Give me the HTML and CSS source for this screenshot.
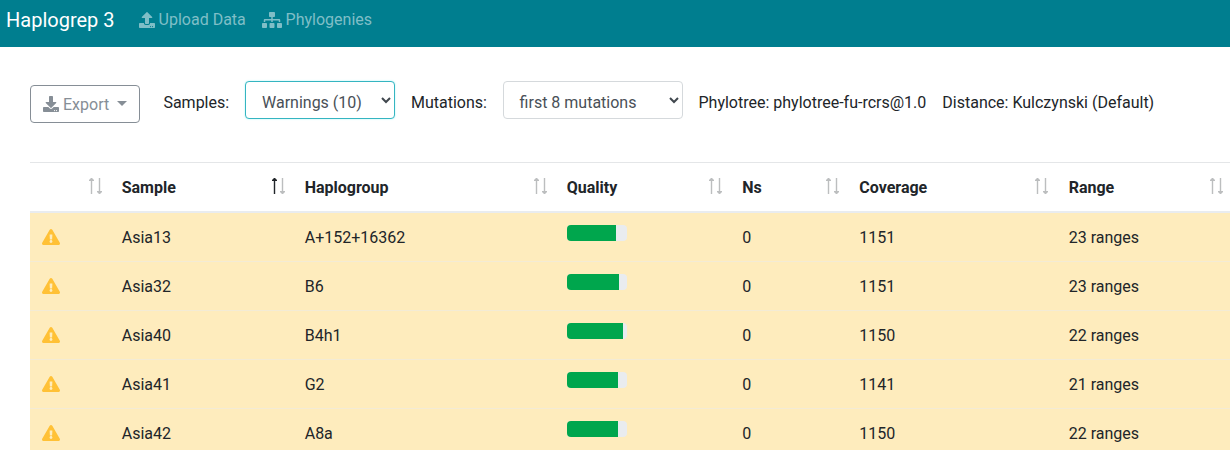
FILE: index.html
```html
<!DOCTYPE html>
<html lang="en">
<head>
<meta charset="utf-8">
<title>Haplogrep 3</title>
<link rel="stylesheet" href="styles.css">
</head>
<body>
<svg class="defs" aria-hidden="true">
  <symbol id="warn" viewBox="0 0 576 512"><path d="M569.517 440.013C587.975 472.007 564.806 512 527.94 512H48.054c-36.937 0-59.999-40.055-41.577-71.987L246.423 23.985c18.467-32.009 64.72-31.951 83.154 0l239.94 416.028zM288 354c-25.405 0-46 20.595-46 46s20.595 46 46 46 46-20.595 46-46-20.595-46-46-46zm-43.673-165.346l7.418 136c.347 6.364 5.609 11.346 11.982 11.346h48.546c6.373 0 11.635-4.982 11.982-11.346l7.418-136c.375-6.874-5.098-12.654-11.982-12.654h-63.383c-6.884 0-12.356 5.78-11.981 12.654z"/></symbol>
  <symbol id="up" viewBox="0 0 5 16"><path d="M1.800 2h1.400v14H1.800zM2 0h1L5 2v1H0V2z"/></symbol>
  <symbol id="down" viewBox="0 0 5 16"><path d="M1.800 0h1.400v14H1.800zM0 13h5v1L3 16H2L0 14z"/></symbol>
</svg>
<nav class="navbar">
  <a class="brand">Haplogrep 3</a>
  <a class="nav-link upload"><svg class="icon" viewBox="0 0 512 512"><path d="M296 384h-80c-13.300 0-24-10.700-24-24V192h-87.700c-17.800 0-26.700-21.500-14.100-34.100L242.300 5.700c7.500-7.500 19.800-7.500 27.300 0l152.200 152.200c12.600 12.600 3.700 34.100-14.100 34.100H320v168c0 13.300-10.700 24-24 24zm216-8v112c0 13.300-10.700 24-24 24H24c-13.300 0-24-10.700-24-24V376c0-13.300 10.700-24 24-24h136v8c0 30.900 25.100 56 56 56h80c30.900 0 56-25.100 56-56v-8h136c13.300 0 24 10.700 24 24zm-124 88c0-11-9-20-20-20s-20 9-20 20 9 20 20 20 20-9 20-20zm64 0c0-11-9-20-20-20s-20 9-20 20 9 20 20 20 20-9 20-20z"/></svg><span>Upload Data</span></a>
  <a class="nav-link"><svg class="icon icon-wide" viewBox="0 0 640 512"><path d="M128 352H32c-17.670 0-32 14.330-32 32v96c0 17.670 14.330 32 32 32h96c17.670 0 32-14.330 32-32v-96c0-17.670-14.330-32-32-32zm-24-80h192v48h48v-48h192v48h48v-57.590c0-21.170-17.230-38.410-38.410-38.410H344v-64h40c17.670 0 32-14.330 32-32V32c0-17.670-14.330-32-32-32H256c-17.670 0-32 14.330-32 32v96c0 17.670 14.330 32 32 32h40v64H94.410C73.230 224 56 241.230 56 262.410V320h48v-48zm264 80h-96c-17.670 0-32 14.330-32 32v96c0 17.670 14.330 32 32 32h96c17.670 0 32-14.330 32-32v-96c0-17.670-14.330-32-32-32zm240 0h-96c-17.670 0-32 14.330-32 32v96c0 17.670 14.330 32 32 32h96c17.670 0 32-14.330 32-32v-96c0-17.670-14.330-32-32-32z"/></svg><span>Phylogenies</span></a>
</nav>
<main class="content">
  <div class="toolbar">
    <button class="export"><svg class="icon" viewBox="0 0 512 512"><path d="M216 0h80c13.300 0 24 10.700 24 24v168h87.700c17.800 0 26.700 21.500 14.100 34.100L269.700 378.300c-7.500 7.500-19.800 7.500-27.300 0L90.100 226.100c-12.600-12.600-3.700-34.100 14.100-34.100H192V24c0-13.300 10.700-24 24-24zm296 376v112c0 13.300-10.700 24-24 24H24c-13.300 0-24-10.700-24-24V376c0-13.300 10.700-24 24-24h146.700l49 49c20.100 20.100 52.500 20.100 72.600 0l49-49H488c13.300 0 24 10.700 24 24zm-124 88c0-11-9-20-20-20s-20 9-20 20 9 20 20 20 20-9 20-20zm64 0c0-11-9-20-20-20s-20 9-20 20 9 20 20 20 20-9 20-20z"/></svg><span>Export</span><i class="caret"></i></button>
    <span class="label samples">Samples:</span>
    <div class="select active"><span>Warnings (10)</span><svg class="chevron" viewBox="0 0 10 7"><path d="M1 1l4 4 4-4"/></svg></div>
    <span class="label mutations">Mutations:</span>
    <div class="select wide"><span>first 8 mutations</span><svg class="chevron" viewBox="0 0 10 7"><path d="M1 1l4 4 4-4"/></svg></div>
    <span class="label tree">Phylotree: phylotree-fu-rcrs@1.0</span>
    <span class="label distance">Distance: Kulczynski (Default)</span>
  </div>
  <table class="results">
    <colgroup><col class="c-icon"><col class="c-sample"><col class="c-group"><col class="c-quality"><col class="c-ns"><col class="c-coverage"><col class="c-range"></colgroup>
    <thead><tr>
      <th><div class="head"><span></span><span class="sort"><svg><use href="#up"/></svg><svg><use href="#down"/></svg></span></div></th>
      <th><div class="head"><span>Sample</span><span class="sort"><svg class="on"><use href="#up"/></svg><svg><use href="#down"/></svg></span></div></th>
      <th><div class="head"><span>Haplogroup</span><span class="sort"><svg><use href="#up"/></svg><svg><use href="#down"/></svg></span></div></th>
      <th><div class="head"><span>Quality</span><span class="sort"><svg><use href="#up"/></svg><svg><use href="#down"/></svg></span></div></th>
      <th><div class="head"><span>Ns</span><span class="sort"><svg><use href="#up"/></svg><svg><use href="#down"/></svg></span></div></th>
      <th><div class="head"><span>Coverage</span><span class="sort"><svg><use href="#up"/></svg><svg><use href="#down"/></svg></span></div></th>
      <th><div class="head"><span>Range</span><span class="sort"><svg><use href="#up"/></svg><svg><use href="#down"/></svg></span></div></th>
    </tr></thead>
    <tbody>
      <tr><td><svg class="warning"><use href="#warn"/></svg></td><td>Asia13</td><td>A+152+16362</td><td><div class="progress"><div class="bar" style="width:49px"></div></div></td><td>0</td><td>1151</td><td>23 ranges</td></tr>
      <tr><td><svg class="warning"><use href="#warn"/></svg></td><td>Asia32</td><td>B6</td><td><div class="progress"><div class="bar" style="width:52px"></div></div></td><td>0</td><td>1151</td><td>23 ranges</td></tr>
      <tr><td><svg class="warning"><use href="#warn"/></svg></td><td>Asia40</td><td>B4h1</td><td><div class="progress"><div class="bar" style="width:56px"></div></div></td><td>0</td><td>1150</td><td>22 ranges</td></tr>
      <tr><td><svg class="warning"><use href="#warn"/></svg></td><td>Asia41</td><td>G2</td><td><div class="progress"><div class="bar" style="width:51px"></div></div></td><td>0</td><td>1141</td><td>21 ranges</td></tr>
      <tr><td><svg class="warning"><use href="#warn"/></svg></td><td>Asia42</td><td>A8a</td><td><div class="progress"><div class="bar" style="width:51px"></div></div></td><td>0</td><td>1150</td><td>22 ranges</td></tr>
    </tbody>
  </table>
</main>
</body>
</html>
```
FILE: styles.css
```css
* { box-sizing: border-box; }
body { margin: 0; height: 450px; overflow: hidden; background: #fff; color: #212529; font: 16px/24px Roboto, sans-serif; }
.defs { display: none; }
.navbar { display: flex; align-items: center; height: 47px; padding: 0 6px 7px; background: #007e8f; }
.brand { width: 132.6px; color: #fff; font-size: 20px; }
.nav-link { display: flex; align-items: center; gap: 4px; color: #7fbec7; }
.upload { width: 123px; }
.icon { width: 16px; height: 16px; fill: currentColor; flex: none; }
.navbar .icon { margin-top: -1px; }
.icon-wide { width: 20px; }
.content { padding: 34px 0 0 30px; }
.toolbar { display: flex; align-items: flex-start; height: 81px; white-space: nowrap; }
.export { display: flex; align-items: center; width: 110px; height: 38px; margin-top: 4px; padding: 0 12px; border: 1px solid #868e96; border-radius: 4px; background: #fff; color: #868e96; font: inherit; }
.export span { margin: 1px 0 0 4px; }
.caret { margin: -2px 0 0 8px; border: 5px solid transparent; border-top-color: currentColor; border-bottom: 0; }
.label { padding-top: 10px; flex: none; }
.samples { width: 105px; padding-left: 23.4px; }
.mutations { width: 108px; padding-left: 16px; }
.tree { width: 244px; padding-left: 15.5px; }
.distance { padding-left: 15.3px; }
.select { display: flex; justify-content: space-between; align-items: center; width: 150px; height: 38px; padding: 5px 3px 0 16px; border: 1px solid #d5d9dc; border-radius: 4px; color: #495057; background: #fff; flex: none; }
.wide { width: 180px; padding-left: 15.6px; }
.active { border-color: #35b5c1; box-shadow: 0 0 2px #a9f2f5; }
.chevron { width: 10px; height: 7px; margin-top: -5px; fill: none; stroke: #40474e; stroke-width: 2; }
.results { width: 1201px; table-layout: fixed; border-collapse: separate; border-spacing: 0; }
.c-icon { width: 80px; }
.c-sample { width: 183px; }
.c-group { width: 262px; }
.c-quality { width: 175.6px; }
.c-ns { width: 117px; }
.c-coverage { width: 209.4px; }
.c-range { width: 174px; }
th { height: 51px; padding: 1px 8.5px 0 11.7px; border-top: 1px solid #e4e6e8; border-bottom: 2px solid #e9ecef; text-align: left; font-weight: 700; }
.head { display: flex; justify-content: space-between; height: 24px; }
.sort { display: flex; gap: 3px; height: 16px; margin-top: 2px; }
.sort svg { width: 5px; height: 16px; fill: #bcbebf; }
.sort .on { fill: #212529; }
td { height: 49px; padding: 13px 12px 11px 11.7px; vertical-align: top; background: #feecbd; border-bottom: 1px solid #f3ebd5; }
.warning { display: block; width: 18px; height: 16px; margin-top: 3px; fill: #ffc136; }
.progress { width: 60px; height: 16px; margin-top: -1px; overflow: hidden; border-radius: 4px; background: #e9ecef; }
.bar { height: 100%; background: #00a64d; }
```
